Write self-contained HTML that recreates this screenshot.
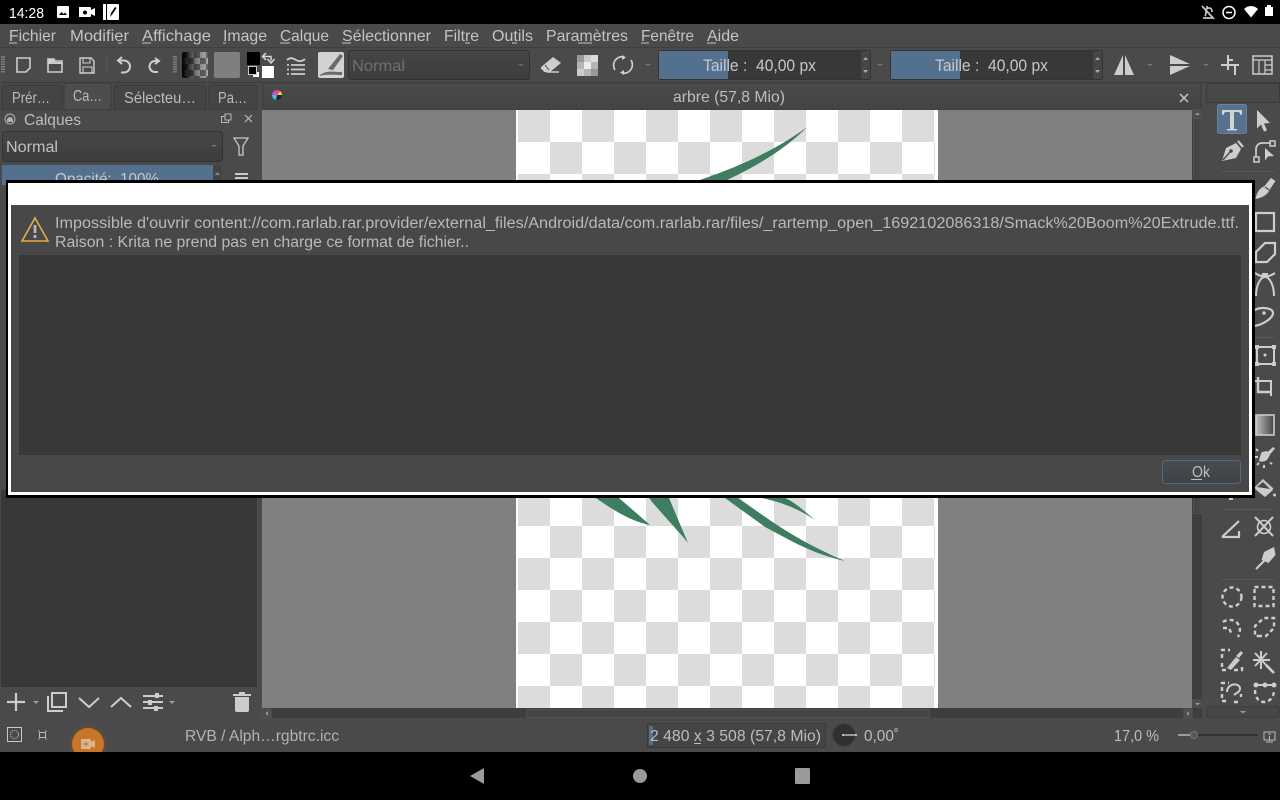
<!DOCTYPE html>
<html lang="fr"><head><meta charset="utf-8"><title>Krita</title>
<style>html,body{margin:0;padding:0;background:#000;width:1280px;height:800px;overflow:hidden}svg{display:block}
text{font-family:"Liberation Sans",sans-serif;font-size:16px;fill:#bdbdbd}
.m{fill:#c4c4c4}.d{fill:#b9b9b9;font-size:15.5px}.s{fill:none;stroke:#cdcdcd;stroke-width:2}.f{fill:#cdcdcd}.u{fill:#c4c4c4}
.dash{fill:none;stroke:#cdcdcd;stroke-width:2.4;stroke-dasharray:4 3}</style></head><body>
<svg width="1280" height="800" viewBox="0 0 1280 800" xmlns="http://www.w3.org/2000/svg">
<defs>
<pattern id="ck" x="518" y="110" width="64" height="64" patternUnits="userSpaceOnUse"><rect width="64" height="64" fill="#fff"/><rect width="32" height="32" fill="#dcdcdc"/><rect x="32" y="32" width="32" height="32" fill="#dcdcdc"/></pattern>
<pattern id="ck2" x="182" y="52" width="12" height="12" patternUnits="userSpaceOnUse"><rect width="12" height="12" fill="#aaa"/><rect width="6" height="6" fill="#666"/><rect x="6" y="6" width="6" height="6" fill="#666"/></pattern>
<linearGradient id="gb" x1="0" x2="1" y1="0" y2="0"><stop offset="0" stop-color="#000"/><stop offset=".6" stop-color="#000" stop-opacity=".25"/><stop offset="1" stop-color="#000" stop-opacity="0"/></linearGradient>
<linearGradient id="tb" x1="0" x2="0" y1="0" y2="1"><stop offset="0" stop-color="#4b4b4b"/><stop offset="1" stop-color="#434343"/></linearGradient>
<linearGradient id="cb" x1="0" x2="0" y1="0" y2="1"><stop offset="0" stop-color="#464646"/><stop offset="1" stop-color="#3d3d3d"/></linearGradient>
<linearGradient id="ok" x1="0" x2="0" y1="0" y2="1"><stop offset="0" stop-color="#474b4f"/><stop offset="1" stop-color="#3f4347"/></linearGradient>
<linearGradient id="gr" x1="0" x2="1" y1="0" y2="0"><stop offset="0" stop-color="#bdbdbd"/><stop offset="1" stop-color="#444"/></linearGradient>
</defs>
<rect width="1280" height="800" fill="#000"/>
<rect y="24" width="1280" height="728" fill="#4a4a4a"/>
<rect y="47" width="1280" height="1" fill="#3f3f3f"/>
<rect y="82" width="1280" height="1" fill="#3b3b3b"/>

<!-- status bar -->
<text x="9" y="18" style="font-size:14.500px;fill:#fff" textLength="35" lengthAdjust="spacingAndGlyphs">14:28</text>
<rect x="57" y="6" width="12" height="12" rx="1" fill="#fff"/><path d="M59 15l2.500-3 2 2 1.500-1.500 2 2.500z" fill="#000"/>
<path d="M79 7h11a1 1 0 0 1 1 1v2l4-2v8l-4-2v2a1 1 0 0 1-1 1H79z" fill="#fff"/><circle cx="85" cy="12.500" r="2" fill="#000"/>
<rect x="103" y="4" width="3" height="16" fill="#fff"/><rect x="107" y="4" width="12" height="16" rx="1" fill="#fff"/><path d="M110 17l1-4 4-6 1.500 1-4 6z" fill="#000"/>
<path d="M1207 6v2M1203 18h9M1205 16c1-1 1-3 1-5 0-2 1-3 3-3s3 1 3 4M1202 6l12 13" fill="none" stroke="#c8c8c8" stroke-width="1.700"/>
<circle cx="1229" cy="12.500" r="6" fill="none" stroke="#fff" stroke-width="1.500"/><rect x="1226" y="11.700" width="6" height="1.600" fill="#fff"/>
<path d="M1244 9c4-4 10-4 14 0l-7 8.500z" fill="#fff"/>
<path d="M1265 7h2V5h4v2h2v9h-8z" fill="#fff"/>

<!-- menu -->
<text class="m" x="9" y="41" textLength="47" lengthAdjust="spacingAndGlyphs">Fichier</text>
<text class="m" x="70" y="41" textLength="59" lengthAdjust="spacingAndGlyphs">Modifier</text>
<text class="m" x="142" y="41" textLength="69" lengthAdjust="spacingAndGlyphs">Affichage</text>
<text class="m" x="223" y="41" textLength="44" lengthAdjust="spacingAndGlyphs">Image</text>
<text class="m" x="280" y="41" textLength="49" lengthAdjust="spacingAndGlyphs">Calque</text>
<text class="m" x="342" y="41" textLength="89" lengthAdjust="spacingAndGlyphs">Sélectionner</text>
<text class="m" x="444" y="41" textLength="35" lengthAdjust="spacingAndGlyphs">Filtre</text>
<text class="m" x="492" y="41" textLength="41" lengthAdjust="spacingAndGlyphs">Outils</text>
<text class="m" x="546" y="41" textLength="82" lengthAdjust="spacingAndGlyphs">Paramètres</text>
<text class="m" x="641" y="41" textLength="53" lengthAdjust="spacingAndGlyphs">Fenêtre</text>
<text class="m" x="707" y="41" textLength="32" lengthAdjust="spacingAndGlyphs">Aide</text>
<g class="u"><rect x="9" y="42.500" width="8" height="1"/><rect x="118" y="42.500" width="4" height="1"/><rect x="142" y="42.500" width="9" height="1"/><rect x="223" y="42.500" width="3" height="1"/><rect x="280" y="42.500" width="10" height="1"/><rect x="342" y="42.500" width="9" height="1"/><rect x="465" y="42.500" width="5" height="1"/><rect x="512" y="42.500" width="5" height="1"/><rect x="578" y="42.500" width="14" height="1"/><rect x="641" y="42.500" width="8" height="1"/><rect x="707" y="42.500" width="9" height="1"/></g>

<!-- toolbar -->
<path d="M3 56v17" stroke="#7c7c7c" stroke-width="4" stroke-dasharray="1.500 1"/>
<path d="M17 58h13v10l-4 4h-9z" class="s" style="stroke-width:1.600"/>
<path d="M48 59h6l1 2h7v11H48z" class="s" style="stroke-width:1.600"/><path d="M48 59h6l1 3h7v2H48z" class="f"/>
<path d="M80 58h11l3 3v12H80z" class="s" style="stroke-width:1.400"/><path d="M83 58h7v5h-7zM83 67h9v6h-9z" class="s" style="stroke-width:1.100"/>
<rect x="106" y="56" width="1" height="18" fill="#555"/>
<path d="M122 57l-4 3.500 4 3.500M119 60.500h5a5.500 5.500 0 0 1 0 12h-3" class="s"/>
<path d="M155 58l4 3-4 3M158 61h-3a5.500 5.500 0 0 0 0 11h3" class="s"/>
<path d="M175 56v17" stroke="#7c7c7c" stroke-width="4" stroke-dasharray="1.500 1"/>
<rect x="182" y="52" width="26" height="26" rx="2" fill="url(#ck2)"/><rect x="182" y="52" width="26" height="26" rx="2" fill="url(#gb)"/>
<rect x="214" y="52" width="26" height="26" rx="2" fill="#7f7f7f"/>
<rect x="247" y="52" width="13" height="13" fill="#000"/><rect x="262" y="66" width="12" height="12" fill="#fff"/>
<rect x="253" y="72" width="6" height="5" fill="#fff"/><rect x="248.500" y="66.500" width="8" height="8" fill="#000" stroke="#ccc"/>
<path d="M266 53l-3.500 3.500 3.500 3.500M263 56.500h8v4M267.500 59l3.500 4 3.500-4" fill="none" stroke="#d8d8d8" stroke-width="1.500"/>
<path d="M287 60c3-3 6-2 9 0s7 1 9-1M291 65h14M291 69.500h14M291 74h14M287 65h2M287 69.500h2M287 74h2" class="s" style="stroke-width:1.800"/>
<rect x="318" y="52" width="26" height="26" rx="2" fill="#d2d2d2"/><path d="M328 69l12-15 3 2-10 14zM320 75c6-5 14-3 22-3v3c-8 0-16-1-22 1z" fill="#6a6a6a"/>
<rect x="348.500" y="50.500" width="181" height="29" rx="3" fill="url(#cb)" stroke="#333"/>
<text x="352" y="71" style="fill:#6f6f6f" textLength="53" lengthAdjust="spacingAndGlyphs">Normal</text>
<path d="M518 64h6l-3 2z" fill="#666"/>
<path d="M541 67l12-10 8 6-11 9h-6z" fill="#cdcdcd"/><path d="M541 68l6 4h12" fill="none" stroke="#cdcdcd" stroke-width="1.500"/><path d="M545 65l4 5" stroke="#4a4a4a" stroke-width="1"/>
<g><rect x="577" y="55" width="21" height="21" fill="#b5b5b5"/><rect x="577" y="55" width="7" height="7" fill="#999"/><rect x="591" y="55" width="7" height="7" fill="#ddd"/><rect x="584" y="62" width="7" height="7" fill="#eee"/><rect x="577" y="69" width="7" height="7" fill="#ccc"/><rect x="591" y="69" width="7" height="7" fill="#999"/><rect x="584" y="55" width="7" height="7" fill="#ccc"/></g>
<path d="M615 70a8.500 8.500 0 0 1 9-13M631 60a8.500 8.500 0 0 1-9 13" class="s" style="stroke-width:1.700"/><path d="M622 55l4 2.500-4 2.500zM624 75l-4-2.500 4-2.500z" class="f"/>
<path d="M645 64h6l-3 2z" fill="#7a7a7a"/>

<rect x="658.500" y="50.500" width="212" height="29" rx="2" fill="#383838" stroke="#333"/>
<rect x="659" y="51" width="69" height="28" fill="#53718f"/>
<text x="703" y="71" textLength="113" lengthAdjust="spacingAndGlyphs" style="font-size:16.500px;fill:#c8c8c8">Taille :&#160; 40,00 px</text>
<rect x="861" y="51" width="9" height="28" rx="2" fill="#464646"/><path d="M863 60h5l-2.500-3zM863 70h5l-2.500 3z" fill="#aaa"/>
<path d="M877 64h6l-3 2z" fill="#7a7a7a"/>
<rect x="890.500" y="50.500" width="212" height="29" rx="2" fill="#383838" stroke="#333"/>
<rect x="891" y="51" width="69" height="28" fill="#53718f"/>
<text x="935" y="71" textLength="113" lengthAdjust="spacingAndGlyphs" style="font-size:16.500px;fill:#c8c8c8">Taille :&#160; 40,00 px</text>
<rect x="1093" y="51" width="9" height="28" rx="2" fill="#464646"/><path d="M1095 60h5l-2.500-3zM1095 70h5l-2.500 3z" fill="#aaa"/>
<path d="M1114 75l9-20v20zM1125 55l9 20h-9z" class="f"/>
<path d="M1147 64h6l-3 2z" fill="#7a7a7a"/>
<path d="M1170 55l20 9h-20zM1170 66h20l-20 9z" class="f"/>
<path d="M1203 64h6l-3 2z" fill="#7a7a7a"/>
<path d="M1228 55v15M1221 65h18M1235 65v10M1228 60h5" class="s"/>
<rect x="1253" y="56" width="19" height="18" class="s" style="stroke-width:1.500"/><path d="M1253 60h19M1265 60v14M1265 65h7M1265 70h7M1259 60v14" class="s" style="stroke-width:1.200"/>

<!-- tabs -->
<path d="M2 109V88a3 3 0 0 1 3-3h54a3 3 0 0 1 3 3v21z" fill="#444" stroke="#3a3a3a"/>
<path d="M64 110V86a3 3 0 0 1 3-3h41a3 3 0 0 1 3 3v24z" fill="#4d4d4d" stroke="#3a3a3a"/>
<path d="M114 109V88a3 3 0 0 1 3-3h86a3 3 0 0 1 3 3v21z" fill="#444" stroke="#3a3a3a"/>
<path d="M209 109V88a3 3 0 0 1 3-3h42a3 3 0 0 1 3 3v21z" fill="#444" stroke="#3a3a3a"/>
<text x="12" y="103" textLength="38" lengthAdjust="spacingAndGlyphs">Prér…</text>
<text x="73" y="101" textLength="29" lengthAdjust="spacingAndGlyphs">Ca…</text>
<text x="124" y="103" textLength="72" lengthAdjust="spacingAndGlyphs">Sélecteu…</text>
<text x="218" y="103" textLength="29" lengthAdjust="spacingAndGlyphs">Pa…</text>
<path d="M263 110V85a2 2 0 0 1 2-2h934a2 2 0 0 1 2 2v25z" fill="url(#tb)" stroke="#3c3c3c"/>
<circle cx="277" cy="95" r="5" fill="#222"/><path d="M272 95a5 5 0 0 1 8-4l-3 4z" fill="#e045b0"/><path d="M272 95h5l-1 5a5 5 0 0 1-4-5z" fill="#35c8e6"/><path d="M277 95l3-4a5 5 0 0 1 2 4z" fill="#f2d33a"/>
<text x="673" y="102" textLength="112" lengthAdjust="spacingAndGlyphs">arbre (57,8 Mio)</text>
<path d="M1180 94l8 8M1188 94l-8 8" fill="none" stroke="#c8c8c8" stroke-width="1.500"/>

<!-- left docker -->
<circle cx="10" cy="119" r="5" fill="none" stroke="#b0b0b0"/><path d="M7 120a3 3 0 0 1 6 0v2H7z" fill="#b0b0b0"/>
<text x="24" y="125" textLength="57" lengthAdjust="spacingAndGlyphs">Calques</text>
<rect x="221.500" y="116.500" width="7" height="6" fill="none" stroke="#bbb"/><rect x="225" y="114" width="6" height="6" fill="#4a4a4a" stroke="#bbb"/>
<path d="M245 115l7 7M252 115l-7 7" fill="none" stroke="#bbb" stroke-width="1.200"/>
<rect x="2.500" y="131.500" width="220" height="30" rx="3" fill="url(#cb)" stroke="#333"/>
<text x="6" y="152" textLength="52" lengthAdjust="spacingAndGlyphs" style="fill:#c0c0c0">Normal</text>
<path d="M211 145h6l-3 2z" fill="#777"/>
<path d="M234 138h14l-5 8v9h-4v-9z" fill="none" stroke="#c8c8c8" stroke-width="1.300"/>
<rect x="2" y="165" width="211" height="20" fill="#53718f"/>
<text x="55" y="184" textLength="104" lengthAdjust="spacingAndGlyphs" style="fill:#c8c8c8">Opacité:&#160; 100%</text>
<rect x="213" y="165" width="9" height="20" fill="#444"/><path d="M215 175h5l-2.500-3z" fill="#888"/>
<path d="M235 174h13M235 178h13" stroke="#c8c8c8" stroke-width="2"/>
<rect x="1" y="490" width="256" height="197" fill="#383838"/>

<!-- docker bottom icons -->
<path d="M16 693v18M7 702h18" class="s" style="stroke-width:2.200"/>
<path d="M33 701h6l-3 3z" fill="#9a9a9a"/>
<path d="M48 696v15h15M52 693h14v14H52z" class="s"/>
<path d="M79 698l10 9 10-9M111 707l10-9 10 9" class="s"/>
<path d="M143 696h20M143 702h20M143 708h20" class="s"/><path d="M155 693h4v5h-4zM148 700h4v5h-4zM154 706h4v5h-4z" class="f"/>
<path d="M169 701h6l-3 3z" fill="#9a9a9a"/>
<path d="M235 697h14v13a2 2 0 0 1-2 2h-10a2 2 0 0 1-2-2zM233 694h18v2h-18zM239 692h6v2h-6z" class="f"/>

<!-- canvas -->
<rect x="262" y="110" width="930" height="598" fill="#808080"/>
<rect x="516" y="110" width="422" height="598" fill="url(#ck)"/>
<rect x="516" y="110" width="2" height="598" fill="#fff"/><rect x="935" y="110" width="3" height="598" fill="#fff"/>
<path d="M807 127C780 147 745 165 697 181L725 181C760 165 790 145 807 127Z" fill="#3e7d60"/>
<path d="M596 498L619 498L650 525C635 522 620 515 596 498Z" fill="#3e7d60"/>
<path d="M649 498L669 498L688 543C675 527 660 512 649 498Z" fill="#3e7d60"/>
<path d="M725 498L738 498C770 520 795 540 845 561C810 553 790 540 765 527Z" fill="#3e7d60"/>
<path d="M762 498L785 498C795 502 805 512 815 520C800 510 785 503 762 498Z" fill="#3e7d60"/>

<!-- scrollbars -->
<rect x="1192" y="110" width="10" height="608" fill="#3e3e3e"/>
<rect x="1193" y="110" width="8" height="8" fill="#4c4c4c" stroke="#555"/><path d="M1195 115h5l-2.500-2.500z" fill="#999"/>
<rect x="1193.500" y="118.500" width="8" height="395" fill="#454545" stroke="#505050"/>
<rect x="1193" y="700" width="8" height="8" fill="#4c4c4c" stroke="#555"/><path d="M1195 703h5l-2.500 2.500z" fill="#999"/>
<rect x="262" y="708" width="940" height="10" fill="#3e3e3e"/>
<rect x="262" y="709" width="9" height="9" fill="#4c4c4c" stroke="#555"/><path d="M268 711v5l-2.500-2.500z" fill="#999"/>
<rect x="526.500" y="709.500" width="403" height="8" fill="#454545" stroke="#505050"/>
<rect x="1184" y="709" width="8" height="9" fill="#4c4c4c" stroke="#555"/><path d="M1187 711v5l2.500-2.500z" fill="#999"/>

<!-- toolbox -->
<rect x="1206.500" y="83.500" width="73" height="19" fill="#484848" stroke="#3a3a3a"/>
<rect x="1217.500" y="104.500" width="29" height="29" rx="2" fill="#557390" stroke="#6a8199"/>
<path d="M1222 110h20v5h-1.500c-.5-2-1-3-3-3H1234v17h3v1.500h-10V129h3v-17h-3.500c-2 0-2.500 1-3 3H1222z" fill="#d3d3d3"/>
<path d="M1257 110l13 13-6 .5 3 7-3 1-3-7-4 4z" class="f"/>
<path d="M1222 161l4-13 10-5 5 6-5 9z" class="f"/><path d="M1223 160l7-8" stroke="#4a4a4a" stroke-width="1.400"/><circle cx="1231" cy="151" r="1.800" fill="#4a4a4a"/><path d="M1238 141l5 6" class="s" style="stroke-width:2.200"/>
<path d="M1256 157v-8a6 6 0 0 1 6-6h9" class="s" style="stroke-width:1.700"/><rect x="1254" y="157" width="5" height="5" class="s" style="stroke-width:1.500"/><rect x="1270" y="141" width="5" height="5" class="s" style="stroke-width:1.500"/><path d="M1265 148l9 8-6 .5-3 4z" class="f"/>
<rect x="1222" y="171" width="52" height="1" fill="#5a5a5a"/>
<path d="M1271 178l4.500 3-6 9c-2 5-8 8-14 9 1-6 4-11 9-13z" class="f"/><path d="M1265 187l4 3" stroke="#4a4a4a" stroke-width="1.200"/>
<rect x="1256" y="213" width="18" height="18" class="s" style="stroke-width:2.200"/>
<path d="M1256 262v-10l9-9h10v11l-8 8z" class="s" style="stroke-width:2.200"/>
<path d="M1256 296c0-12 5-19 9-19s9 7 9 19M1255 273q10 7 20 0" class="s"/><rect x="1262" y="273" width="6" height="5" class="f"/>
<path d="M1255 326c9-2 18-8 18-13 0-4-6-5-10-5-4 0-8 1-10 4" class="s" style="stroke-width:2.200"/><circle cx="1264" cy="313" r="1.800" class="f"/>
<rect x="1222" y="337" width="52" height="1" fill="#5a5a5a"/>
<rect x="1257" y="347" width="17" height="17" class="s"/><path d="M1255 345h4v4h-4zM1272 345h4v4h-4zM1255 362h4v4h-4zM1272 362h4v4h-4z" class="f"/><circle cx="1265" cy="355" r="1.500" class="f"/>
<path d="M1258 377v15h14" class="s" style="stroke-width:2.400"/><path d="M1254 381h17v15" class="s" style="stroke-width:2"/>
<rect x="1256" y="415" width="18" height="20" fill="url(#gr)" stroke="#ccc" stroke-width="1.600"/>
<path d="M1273 447l2 1.500-5 6-3-2z" class="f"/><path d="M1262 452l5-1 3 4-3 5c-3 2-6 2-8 1 1-3 1-6 3-9z" class="f"/><path d="M1256 449l2 2M1255 457h3M1257 465l2-2M1264 468v-3M1272 464l-2-1.500" class="s"/>
<path d="M1255 489l8-8 10 9-8 7z" class="f"/><path d="M1255 488l8-8 10 9" class="s" style="stroke-width:1.400"/><path d="M1257 487l6-5 7 7z" fill="#4a4a4a"/><circle cx="1274.500" cy="495" r="1.500" class="f"/>
<rect x="1229" y="497" width="4" height="3" class="f"/>
<rect x="1222" y="509" width="52" height="1" fill="#5a5a5a"/>
<path d="M1222 537l17-16M1222 537h17v-6" class="s" style="stroke-width:2.200"/>
<path d="M1255 517l18 19M1273 517l-18 19" class="s"/><circle cx="1264" cy="527" r="6.500" class="s" style="stroke-width:1.600"/>
<path d="M1264 552l10-5 1.500 8-7 8-7-3zM1266 560l-11 9" class="f"/><path d="M1264 561l-8 8" class="s"/>
<rect x="1222" y="579" width="52" height="1" fill="#5a5a5a"/>
<circle cx="1232" cy="597" r="9.500" class="dash"/>
<rect x="1254.500" y="587" width="19" height="19" class="dash"/>
<path d="M1223 622c4-3 12-3 15 2 3 4 2 8 0 13M1223 628h6l3 7" class="dash"/>
<path d="M1258 636h8l8-8v-10h-10l-9 8v10z" class="dash"/>
<path d="M1222 658v-8h8M1222 663v7h7M1234 670h8v-6" class="dash"/>
<path d="M1227 668l9-11 4 3-9 10z" class="f"/><path d="M1236 656l5-5 2 2-4 5z" class="f"/>
<path d="M1261 651v18M1253 660h17M1255 653l12 13M1267 653l-12 13" class="s" style="stroke-width:2"/><path d="M1266 665l8 8" class="s" style="stroke-width:2.600"/>
<path d="M1222 691v-8h7M1222 694v7h7M1234 702h7M1241 697v-3" class="dash"/><path d="M1227 692c0-9 13-10 13-3 0 3-4 4-6 6" class="s"/>
<path d="M1255 690c0 8 4 12 9 12s10-4 10-12" class="dash"/><path d="M1255 685h19" class="s"/><circle cx="1256" cy="685" r="2.500" class="f"/><circle cx="1265" cy="685" r="2.500" class="f"/><circle cx="1274" cy="685" r="2.500" class="f"/>
<rect x="1207" y="707" width="72" height="10" rx="2" fill="#484848" stroke="#3a3a3a"/><path d="M1240 711h6l-3 2.500z" fill="#9a9a9a"/>

<!-- bottom status -->
<rect x="7.500" y="727.500" width="14" height="14" fill="none" stroke="#c8c8c8"/><circle cx="14.500" cy="734.500" r="4" fill="none" stroke="#c8c8c8" stroke-dasharray="1 1"/>
<rect x="39.500" y="732.500" width="6" height="5" fill="none" stroke="#bbb"/><path d="M38 731h2M45 731h2M38 739h2M45 739h2" stroke="#aaa"/>
<circle cx="88" cy="744" r="19" fill="#6a4c37" opacity=".5"/><circle cx="88" cy="744" r="16" fill="#c97526"/>
<path d="M81 739h9a1 1 0 0 1 1 1v2l4-2v8l-4-2v2a1 1 0 0 1-1 1h-9z" fill="#d9b28f"/><circle cx="86" cy="744" r="1.600" fill="#c97526"/>
<text x="185" y="741" textLength="154" lengthAdjust="spacingAndGlyphs" style="fill:#b3b3b3">RVB / Alph…rgbtrc.icc</text>
<rect x="647.500" y="723.500" width="178" height="24" fill="#454545" stroke="#3a3a3a"/>
<rect x="649" y="726" width="4" height="19" fill="#53718f"/>
<text x="650" y="741" textLength="171" lengthAdjust="spacingAndGlyphs">2 480 x 3 508 (57,8 Mio)</text>
<rect x="694" y="743" width="7" height="1" fill="#bdbdbd"/>
<circle cx="844" cy="735" r="11.500" fill="#303030" stroke="#444"/>
<path d="M843 735h13" stroke="#ddd" stroke-width="1.200"/><circle cx="843" cy="735" r="1" fill="#ddd"/><circle cx="856" cy="735" r="1" fill="#ddd"/>
<text x="864" y="741" textLength="35" lengthAdjust="spacingAndGlyphs">0,00˚</text>
<text x="1114" y="741" textLength="45" lengthAdjust="spacingAndGlyphs">17,0 %</text>
<rect x="1178" y="734" width="80" height="2" fill="#333"/><rect x="1178" y="734" width="14" height="2" fill="#8aa0b5"/>
<circle cx="1194" cy="735" r="3.500" fill="#555" stroke="#777"/>
<rect x="1264" y="732" width="11" height="8" fill="none" stroke="#bbb"/><path d="M1269.500 736v5M1266 742h7M1268 734h3" stroke="#bbb"/>

<!-- nav -->
<rect y="752" width="1280" height="48" fill="#000"/>
<path d="M470 776l14-8v16z" fill="#9a9a9a"/>
<circle cx="640" cy="776" r="7" fill="#9a9a9a"/>
<rect x="795" y="768" width="15" height="16" rx="1" fill="#9a9a9a"/>

<!-- dialog -->
<rect x="6" y="180" width="1249" height="318" fill="#000"/>
<rect x="8" y="183" width="1244" height="312" fill="#fff"/>
<rect x="11" y="205" width="1238" height="287" fill="#484848"/>
<path d="M35 218l13 23H22z" fill="none" stroke="#e9ab44" stroke-width="1.600"/><rect x="33.600" y="225" width="2.800" height="8" fill="#b5b5b5"/><rect x="33.600" y="235" width="2.800" height="3" fill="#b5b5b5"/>
<text class="d" x="55" y="228" textLength="1184" lengthAdjust="spacingAndGlyphs">Impossible d'ouvrir content://com.rarlab.rar.provider/external_files/Android/data/com.rarlab.rar/files/_rartemp_open_1692102086318/Smack%20Boom%20Extrude.ttf.</text>
<text class="d" x="55" y="247" textLength="414" lengthAdjust="spacingAndGlyphs">Raison : Krita ne prend pas en charge ce format de fichier..</text>
<rect x="19" y="255" width="1222" height="200" fill="#383838"/>
<rect x="1162.500" y="460.500" width="78" height="23" rx="3" fill="url(#ok)" stroke="#4f6a80"/>
<text x="1192" y="477" textLength="18" lengthAdjust="spacingAndGlyphs" style="fill:#bdbdbd">Ok</text>
<rect x="1191" y="479" width="11" height="1" fill="#bdbdbd"/>
</svg>
</body></html>
